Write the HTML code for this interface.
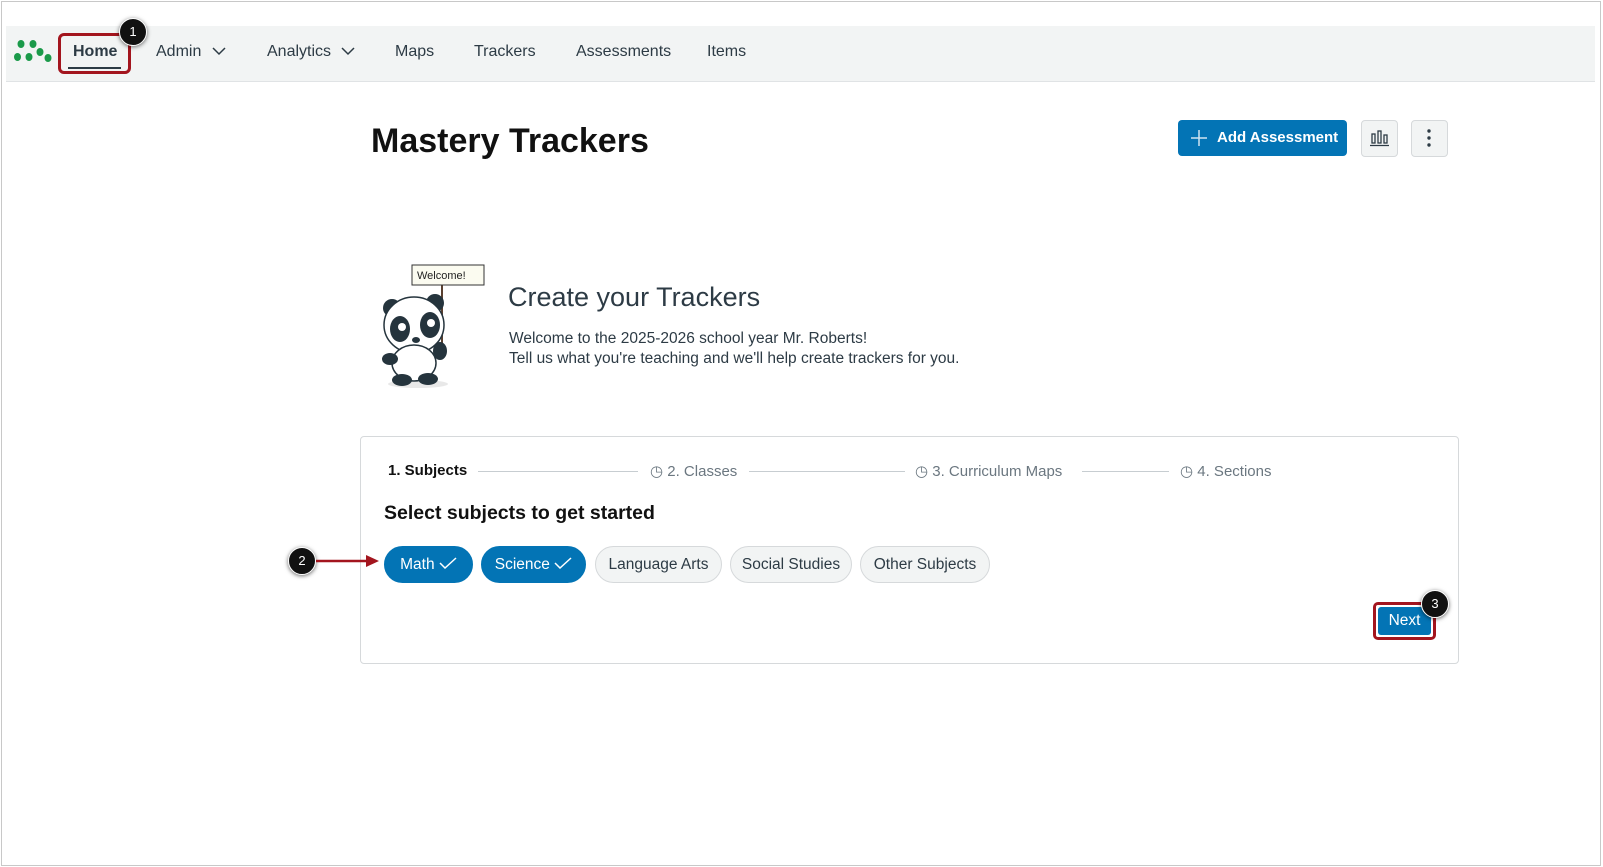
<!DOCTYPE html>
<html><head><meta charset="utf-8"><style>
*{box-sizing:border-box;margin:0;padding:0}
body{width:1603px;height:867px;background:#fff;font-family:"Liberation Sans",sans-serif;color:#2d3b45;position:relative;overflow:hidden}
.frame{position:absolute;left:1px;top:1px;width:1600px;height:865px;border:1px solid #c8c8c8}
.nav{position:absolute;left:6px;top:26px;width:1589px;height:56px;background:#f2f4f4;border-bottom:1px solid #e0e3e5}
.nav span{position:absolute;top:17px;font-size:16px;color:#2d3b45;white-space:nowrap}
.abs{position:absolute;white-space:nowrap}
.badge{position:absolute;width:28px;height:28px;border-radius:50%;background:#111;color:#fff;font-size:13px;text-align:center;line-height:26px;border:1.5px solid #fff;box-shadow:0 1px 4px rgba(0,0,0,.6)}
.pill{position:absolute;top:546px;height:37px;border-radius:19px;font-size:15.5px;line-height:35px;text-align:center;border:1px solid #d6d9db;background:#f2f4f4;color:#2d3b45;white-space:nowrap}
.pill.on{background:#0374b5;border-color:#0374b5;color:#fff}
.step{position:absolute;top:462px;font-size:15px;color:#6b7780;white-space:nowrap}
.line{position:absolute;top:471px;height:1px;background:#c7cdd1}
</style></head><body>
<div class="frame"></div>
<div class="nav">
<svg class="abs" style="left:8px;top:13px" width="38" height="24" viewBox="0 0 38 24"><g fill="#1b9a4a"><ellipse cx="7" cy="5" rx="3.5" ry="4"/><ellipse cx="19" cy="5" rx="3.5" ry="4"/><ellipse cx="3.5" cy="18" rx="3.5" ry="4"/><ellipse cx="15" cy="18" rx="3.5" ry="4"/><ellipse cx="26" cy="13" rx="3.5" ry="4"/><ellipse cx="34" cy="19" rx="3.5" ry="4"/></g></svg>
<span style="left:67px;font-weight:bold">Home</span>
<div class="abs" style="left:62px;top:41px;width:53px;height:2px;background:#2d3b45"></div>
<span style="left:150px">Admin <svg width="14" height="10" style="margin-left:6px"><path d="M1 2l6 6 6-6" fill="none" stroke="#2d3b45" stroke-width="1.5"/></svg></span>
<span style="left:261px">Analytics <svg width="14" height="10" style="margin-left:6px"><path d="M1 2l6 6 6-6" fill="none" stroke="#2d3b45" stroke-width="1.5"/></svg></span>
<span style="left:389px">Maps</span>
<span style="left:468px">Trackers</span>
<span style="left:570px">Assessments</span>
<span style="left:701px">Items</span>
</div>
<div class="abs" style="left:58px;top:33px;width:73px;height:41px;border:3px solid #a3151e;border-radius:6px"></div>
<div class="badge" style="left:119px;top:18px">1</div>

<div class="abs" style="left:371px;top:122px;font-size:34px;font-weight:bold;color:#111">Mastery Trackers</div>
<div class="abs" style="left:1178px;top:120px;width:169px;height:36px;background:#0374b5;border-radius:4px;color:#fff;font-size:15px;font-weight:bold;line-height:36px;padding-left:39px">Add Assessment</div>
<svg class="abs" style="left:1191px;top:130px" width="16" height="16"><path d="M8 0v16M0 8h16" stroke="#cfe4f2" stroke-width="1.5"/></svg>
<div class="abs" style="left:1361px;top:120px;width:37px;height:37px;background:#f2f4f4;border:1px solid #d6d9db;border-radius:4px"></div>
<svg class="abs" style="left:1369px;top:128px" width="21" height="20"><g fill="none" stroke="#2d3b45" stroke-width="1.3"><rect x="3" y="6" width="3" height="9"/><rect x="9" y="3" width="3" height="12"/><rect x="15" y="7" width="3" height="8"/><path d="M1 17.5h19"/></g></svg>
<div class="abs" style="left:1411px;top:120px;width:37px;height:37px;background:#f2f4f4;border:1px solid #d6d9db;border-radius:4px"></div>
<svg class="abs" style="left:1426px;top:128px" width="6" height="22"><g fill="#2d3b45"><circle cx="3" cy="3" r="1.7"/><circle cx="3" cy="10" r="1.7"/><circle cx="3" cy="17" r="1.7"/></g></svg>

<svg class="abs" style="left:380px;top:263px" width="110" height="126" viewBox="0 0 110 126">
<ellipse cx="38" cy="121" rx="30" ry="4" fill="#e8e8e8"/>
<line x1="62" y1="20" x2="62" y2="85" stroke="#5a4030" stroke-width="2"/>
<rect x="32" y="2" width="72" height="20" fill="#fbfbf0" stroke="#333"/>
<text x="37" y="16" font-size="11" font-family="Liberation Sans" fill="#222">Welcome!</text>
<circle cx="12" cy="45" r="9" fill="#25343d"/><circle cx="55" cy="40" r="9" fill="#25343d"/>
<ellipse cx="34" cy="62" rx="30" ry="28" fill="#fff" stroke="#25343d" stroke-width="1.5"/>
<ellipse cx="20" cy="66" rx="10" ry="13" fill="#25343d"/><ellipse cx="50" cy="62" rx="10" ry="13" fill="#25343d"/>
<circle cx="22" cy="64" r="4" fill="#fff"/><circle cx="51" cy="60" r="4" fill="#fff"/>
<ellipse cx="36" cy="77" rx="4" ry="3" fill="#25343d"/>
<ellipse cx="34" cy="100" rx="22" ry="18" fill="#fff" stroke="#25343d" stroke-width="1.5"/>
<ellipse cx="10" cy="96" rx="8" ry="6" fill="#25343d"/><ellipse cx="60" cy="88" rx="7" ry="9" fill="#25343d"/>
<ellipse cx="22" cy="117" rx="10" ry="6" fill="#25343d"/><ellipse cx="48" cy="116" rx="10" ry="6" fill="#25343d"/>
</svg>
<div class="abs" style="left:508px;top:282px;font-size:27px;color:#2d3b45">Create your Trackers</div>
<div class="abs" style="left:509px;top:329px;font-size:15.5px;line-height:20px;color:#2d3b45">Welcome to the 2025-2026 school year Mr. Roberts!<br>Tell us what you're teaching and we'll help create trackers for you.</div>

<div class="abs" style="left:360px;top:436px;width:1099px;height:228px;border:1px solid #d6d9db;border-radius:4px"></div>
<div class="step" style="left:388px;color:#111;font-weight:bold">1. Subjects</div>
<div class="line" style="left:478px;width:160px"></div>
<div class="step" style="left:650px">◷ 2. Classes</div>
<div class="line" style="left:749px;width:156px"></div>
<div class="step" style="left:915px">◷ 3. Curriculum Maps</div>
<div class="line" style="left:1082px;width:87px"></div>
<div class="step" style="left:1180px">◷ 4. Sections</div>
<div class="abs" style="left:384px;top:502px;font-size:19.5px;font-weight:bold;color:#111">Select subjects to get started</div>

<div class="pill on" style="left:384px;width:89px">Math <svg width="18" height="12"><path d="M1 6l5 5L17 1" fill="none" stroke="#fff" stroke-width="1.5"/></svg></div>
<div class="pill on" style="left:481px;width:105px">Science <svg width="18" height="12"><path d="M1 6l5 5L17 1" fill="none" stroke="#fff" stroke-width="1.5"/></svg></div>
<div class="pill" style="left:595px;width:127px">Language Arts</div>
<div class="pill" style="left:730px;width:122px">Social Studies</div>
<div class="pill" style="left:860px;width:130px">Other Subjects</div>

<div class="badge" style="left:288px;top:547px">2</div>
<svg class="abs" style="left:316px;top:554px" width="64" height="14"><path d="M0 7h52" stroke="#a3151e" stroke-width="2.5"/><path d="M50 1l13 6-13 6z" fill="#a3151e"/></svg>

<div class="abs" style="left:1373px;top:602px;width:63px;height:38px;border:3px solid #a3151e;border-radius:5px;padding:2px"><div style="background:#0374b5;border-radius:3px;height:100%;color:#fff;font-size:15.5px;text-align:center;line-height:28px">Next</div></div>
<div class="badge" style="left:1421px;top:590px">3</div>
</body></html>
